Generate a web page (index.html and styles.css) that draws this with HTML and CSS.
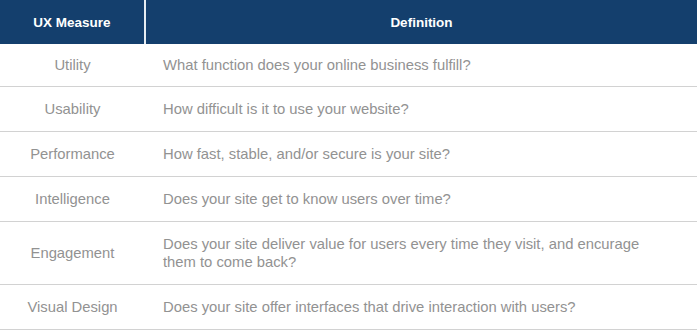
FILE: index.html
```html
<!DOCTYPE html>
<html lang="en">
<head>
<meta charset="UTF-8" />
<title>UX Measures</title>
<link rel="stylesheet" href="styles.css">
</head>
<body>
<table class="ux-table">
  <thead>
    <tr>
      <th class="col-measure">UX Measure</th>
      <th class="col-def">Definition</th>
    </tr>
  </thead>
  <tbody>
    <tr>
      <td class="measure">Utility</td>
      <td class="def">What function does your online business fulfill?</td>
    </tr>
    <tr>
      <td class="measure">Usability</td>
      <td class="def">How difficult is it to use your website?</td>
    </tr>
    <tr>
      <td class="measure">Performance</td>
      <td class="def">How fast, stable, and/or secure is your site?</td>
    </tr>
    <tr>
      <td class="measure">Intelligence</td>
      <td class="def">Does your site get to know users over time?</td>
    </tr>
    <tr>
      <td class="measure">Engagement</td>
      <td class="def">Does your site deliver value for users every time they visit, and encurage them to come back?</td>
    </tr>
    <tr>
      <td class="measure">Visual Design</td>
      <td class="def">Does your site offer interfaces that drive interaction with users?</td>
    </tr>
  </tbody>
</table>
</body>
</html>
```

FILE: styles.css
```css
* { box-sizing: border-box; }
body {
  margin: 0;
  background: #fff;
  font-family: 'Liberation Sans', Arial, sans-serif;
}
.ux-table {
  width: 697px;
  border-collapse: collapse;
  table-layout: fixed;
}
/* Header */
.ux-table th {
  background: #143f6d;
  color: #fff;
  font-size: 13.5px;
  font-weight: bold;
  height: 44px;
  padding: 0;
  text-align: center;
}
.col-measure {
  width: 145px;
  border-right: 2px solid #e6ecf2;
}
/* Body rows */
.ux-table td {
  color: #929292;
  font-size: 14.8px;
  line-height: 18px;
  padding: 13px 0;
  border-bottom: 1px solid #d2d2d2;
  vertical-align: middle;
}
.ux-table tbody tr:first-child td { padding-top: 12px; padding-bottom: 12px; }
.measure { text-align: center; }
.ux-table .def { padding-left: 18px; padding-right: 50px; }
```
